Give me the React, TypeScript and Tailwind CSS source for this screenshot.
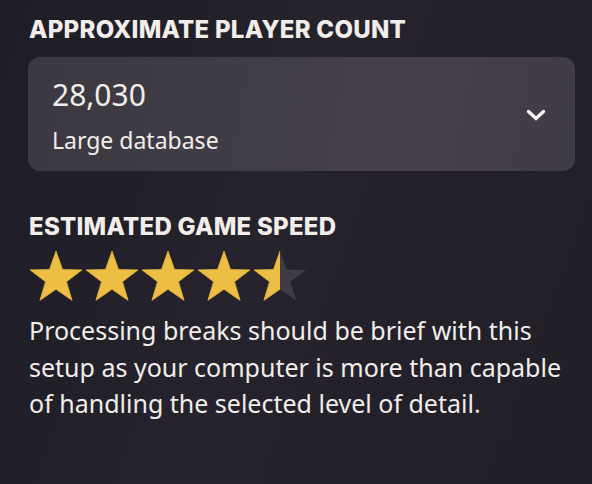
// regular five-point star, 52x50 box
const STAR_PATH =
  'M26 0 L32.5 18.4 L52 18.9 L36.5 30.7 L42.1 49.4 L26 38.3 L9.9 49.4 L15.5 30.7 L0 18.9 L19.5 18.4 Z';

function Star({ fill, index }: { fill: number; index: number }) {
  const id = `star-clip-${index}`;
  return (
    <svg width="52" height="50" viewBox="0 0 52 50" className="block shrink-0">
      <defs>
        <clipPath id={id}>
          <rect x="0" y="0" width={52 * fill} height="50" />
        </clipPath>
      </defs>
      <path d={STAR_PATH} fill="#403c45" />
      <path
        d={STAR_PATH}
        fill="#ecbf44"
        stroke="#dcae38"
        strokeWidth="0.8"
        strokeLinejoin="round"
        clipPath={`url(#${id})`}
      />
    </svg>
  );
}

export default function App() {
  const rating = 4.5;
  return (
    <div
      className="w-[592px] h-[484px] overflow-hidden bg-[#211f28] bg-[linear-gradient(110deg,#1f1d25_0%,#211f28_25%,#26232d_45%,#232029_70%,#211f28_100%)] text-[#f1edeb] pl-[29px] pt-[15px]"
      style={{ fontFamily: '"Noto Sans", sans-serif' }}
    >
      <h2
        className="text-[24px] leading-[30px] font-extrabold tracking-[0.25px] uppercase"
        style={{ fontFamily: 'Inter, sans-serif' }}
      >
        Approximate player count
      </h2>

      <button className="mt-[12px] -ml-px w-[547px] h-[114px] rounded-xl bg-[#3e3a44] bg-[linear-gradient(100deg,#3b3841_0%,#423e49_45%,#45404b_70%,#3f3b45_100%)] flex items-center justify-between pl-[24px] pr-[29px] text-left">
        <div className="flex flex-col pt-[2px]">
          <span className="text-[30px] leading-[36px]">28,030</span>
          <span className="text-[23px] leading-[28px] mt-[13px]">Large database</span>
        </div>
        <svg width="20" height="12" viewBox="0 0 20 12" className="block shrink-0 mt-[1px]">
          <polyline
            points="2.5,2.5 10,9.5 17.5,2.5"
            fill="none"
            stroke="#f4f0ee"
            strokeWidth="3.4"
            strokeLinecap="round"
            strokeLinejoin="miter"
          />
        </svg>
      </button>

      <h2
        className="mt-[41px] text-[24px] leading-[30px] font-extrabold tracking-[0.25px] uppercase"
        style={{ fontFamily: 'Inter, sans-serif' }}
      >
        Estimated game speed
      </h2>

      <div className="flex gap-[4px] mt-[9px] ml-[1px]">
        {[0, 1, 2, 3, 4].map((i) => (
          <Star key={i} index={i} fill={Math.max(0, Math.min(1, rating - i))} />
        ))}
      </div>

      <p className="mt-[11px] text-[25px] leading-[36.5px] w-[545px]">
        Processing breaks should be brief with this setup as your computer is more than capable of
        handling the selected level of detail.
      </p>
    </div>
  );
}
